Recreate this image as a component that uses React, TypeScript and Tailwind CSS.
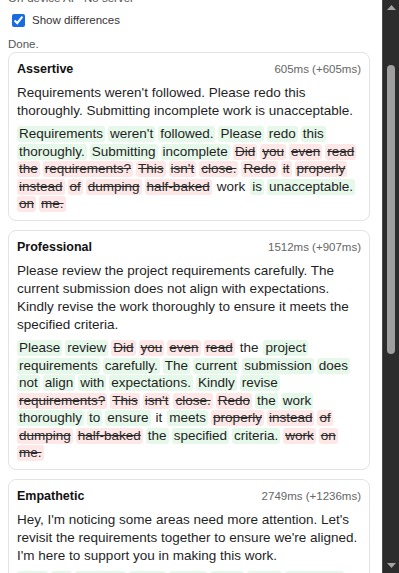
import React from "react";

type Seg = { t: "a" | "d" | "c"; s: string };

const seg = (t: "a" | "d" | "c", s: string): Seg => ({ t, s });

type Card = {
  title: string;
  time: string;
  body: string;
  diff: Seg[];
};

const cards: Card[] = [
  {
    title: "Assertive",
    time: "605ms (+605ms)",
    body: "Requirements weren't followed. Please redo this thoroughly. Submitting incomplete work is unacceptable.",
    diff: [
      seg("a", "Requirements weren't followed. Please redo this thoroughly. Submitting incomplete"),
      seg("d", "Did you even read the requirements? This isn't close. Redo it properly instead of dumping half-baked"),
      seg("c", "work"),
      seg("a", "is unacceptable."),
      seg("d", "on me."),
    ],
  },
  {
    title: "Professional",
    time: "1512ms (+907ms)",
    body: "Please review the project requirements carefully. The current submission does not align with expectations. Kindly revise the work thoroughly to ensure it meets the specified criteria.",
    diff: [
      seg("a", "Please review"),
      seg("d", "Did you even read"),
      seg("c", "the"),
      seg("a", "project requirements carefully. The current submission does not align with expectations. Kindly revise"),
      seg("d", "requirements? This isn't close. Redo"),
      seg("a", "the work thoroughly to ensure"),
      seg("c", "it"),
      seg("a", "meets"),
      seg("d", "properly instead of dumping half-baked"),
      seg("a", "the specified criteria."),
      seg("d", "work on me."),
    ],
  },
  {
    title: "Empathetic",
    time: "2749ms (+1236ms)",
    body: "Hey, I'm noticing some areas need more attention. Let's revisit the requirements together to ensure we're aligned. I'm here to support you in making this work.",
    diff: [
      seg("a", "Hey, I'm noticing some areas need more attention. Let's revisit"),
      seg("d", "Did you even read"),
      seg("c", "the requirements"),
      seg("a", "together to ensure we're aligned. I'm here to support you in making this"),
      seg("d", "requirements? This isn't close. Redo it properly instead of dumping half-baked"),
      seg("c", "work"),
      seg("d", "on me."),
    ],
  },
];

function Word({ t, w }: { t: Seg["t"]; w: string }) {
  if (t === "a")
    return <span className="px-[2px] h-[16px] leading-[16px] rounded-[3px] bg-[#e5f8ea] text-[#1f1f1f]">{w}</span>;
  if (t === "d")
    return (
      <span className="px-[2px] h-[16px] leading-[16px] rounded-[3px] bg-[#fde7e7] text-[#2a2a2a] line-through decoration-[#2a2a2a]">
        {w}
      </span>
    );
  return <span className="px-[2px] h-[16px] leading-[16px] text-[#1f1f1f]">{w}</span>;
}

function DiffCard({ card }: { card: Card }) {
  const words: { t: Seg["t"]; w: string }[] = [];
  card.diff.forEach((s) => s.s.split(" ").forEach((w) => words.push({ t: s.t, w })));
  return (
    <div className="rounded-lg border border-[#e3e3e3] bg-white p-2">
      <div className="flex items-baseline justify-between h-[16px] leading-[16px]">
        <span className="text-[12.5px] font-bold text-[#111]">{card.title}</span>
        <span className="text-[11.5px] text-[#666]">{card.time}</span>
      </div>
      <p className="mt-[7px] text-[13.5px] leading-[18px] text-[#1f1f1f]">{card.body}</p>
      <div className="mt-[6px] flex flex-wrap gap-x-[3px] gap-y-[1.5px] text-[13.5px]">
        {words.map((x, i) => (
          <Word key={i} t={x.t} w={x.w} />
        ))}
      </div>
    </div>
  );
}

function Scrollbar() {
  return (
    <div className="flex w-[17px] shrink-0 flex-col border-l border-[#4a4a4a] bg-[#2c2c2c]">
      <div className="flex h-[15px] items-center justify-center">
        <svg width="9" height="5" viewBox="0 0 9 5">
          <path d="M4.5 0 L9 5 L0 5 Z" fill="#a3a3a3" />
        </svg>
      </div>
      <div className="flex flex-1 flex-col items-center">
        <div className="mt-[50px] h-[289px] w-[8px] rounded-full bg-[#9f9f9f]" />
      </div>
      <div className="flex h-[15px] items-center justify-center">
        <svg width="9" height="5" viewBox="0 0 9 5">
          <path d="M0 0 L9 0 L4.5 5 Z" fill="#a3a3a3" />
        </svg>
      </div>
    </div>
  );
}

export default function App() {
  return (
    <div
      className="flex h-[573px] w-full overflow-hidden bg-white"
      style={{ fontFamily: '"Liberation Sans", Arial, sans-serif' }}
    >
      <div className="min-w-0 flex-1 overflow-hidden">
        <div className="-mt-[10px] pl-2 pr-3">
          <div className="h-[16px] text-[11.5px] leading-[16px] text-[#555]">On-device AI · No server</div>
          <label className="mt-[5px] flex h-[19px] items-center">
            <input type="checkbox" defaultChecked className="m-0 ml-1 h-[13px] w-[13px] accent-[#1a6be0]" />
            <span className="ml-[7px] text-[11.5px] text-[#333]">Show differences</span>
          </label>
          <div className="mt-[6px] h-[16px] text-[11.5px] leading-[16px] text-[#555]">Done.</div>
          <div className="flex flex-col gap-[9px]">
            {cards.map((c) => (
              <DiffCard key={c.title} card={c} />
            ))}
          </div>
        </div>
      </div>
      <Scrollbar />
    </div>
  );
}
